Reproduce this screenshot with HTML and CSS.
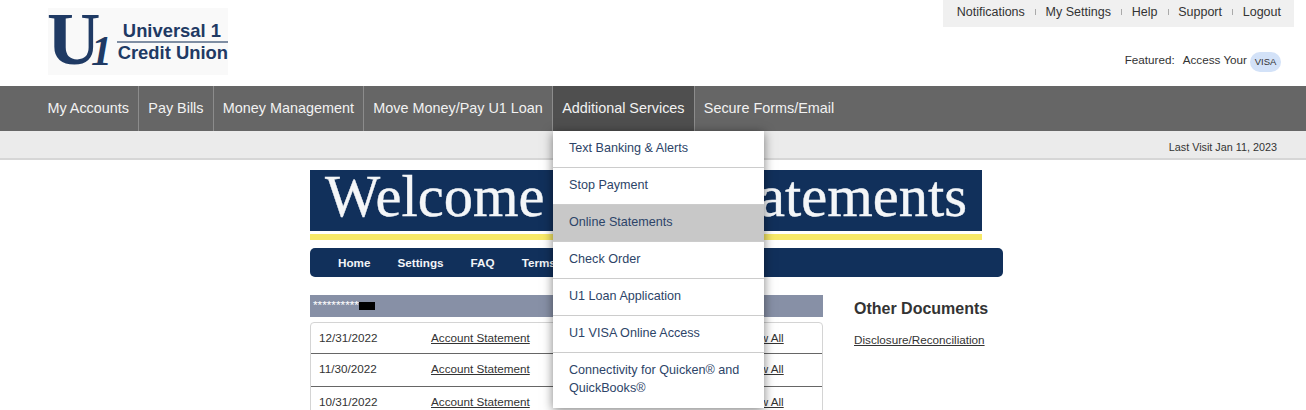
FILE: index.html
```html
<!DOCTYPE html>
<html lang="en">
  <head>
    <meta charset="UTF-8" />
    <meta name="viewport" content="width=device-width, initial-scale=1.0" />
    <title>Online Statements</title>
    <link rel="stylesheet" href="styles.css">
  </head>
  <body>
    <div class="header">
      <div class="logo">
        <span class="logo-u">U</span><span class="logo-one">1</span>
        <div class="logo-name">
          <span class="logo-top">Universal 1</span>
          <span class="logo-bottom">Credit Union</span>
        </div>
      </div>
      <div class="header-right">
        <ul class="top-links">
          <li>Notifications</li>
          <li>My Settings</li>
          <li>Help</li>
          <li>Support</li>
          <li>Logout</li>
        </ul>
        <div class="featured">
          <span class="featured-text">Featured:</span>
          <span class="featured-text">Access Your</span>
          <span class="visa">VISA</span>
        </div>
      </div>
    </div>

    <ul class="nav">
      <li>My Accounts</li>
      <li>Pay Bills</li>
      <li>Money Management</li>
      <li>Move Money/Pay U1 Loan</li>
      <li class="active">
        Additional Services
        <ul class="dropdown">
          <li>Text Banking &amp; Alerts</li>
          <li>Stop Payment</li>
          <li class="selected">Online Statements</li>
          <li>Check Order</li>
          <li>U1 Loan Application</li>
          <li>U1 VISA Online Access</li>
          <li>Connectivity for Quicken® and QuickBooks®</li>
        </ul>
      </li>
      <li>Secure Forms/Email</li>
    </ul>
    <div class="last-visit">Last Visit Jan 11, 2023</div>

    <div class="content">
      <div class="banner">
        <div class="banner-title">
          <span>Welcome</span>
          <span>to eStatements</span>
        </div>
      </div>
      <ul class="tabs">
        <li>Home</li>
        <li>Settings</li>
        <li>FAQ</li>
        <li>Terms</li>
      </ul>
      <div class="columns">
        <div class="statements">
          <div class="account-bar">**********<span class="redacted"></span></div>
          <div class="statement-list">
            <div class="statement-row">
              <span class="date">12/31/2022</span>
              <a class="name">Account Statement</a>
              <a class="view-all">View All</a>
            </div>
            <div class="statement-row">
              <span class="date">11/30/2022</span>
              <a class="name">Account Statement</a>
              <a class="view-all">View All</a>
            </div>
            <div class="statement-row">
              <span class="date">10/31/2022</span>
              <a class="name">Account Statement</a>
              <a class="view-all">View All</a>
            </div>
          </div>
        </div>
        <div class="other-docs">
          <h3>Other Documents</h3>
          <a>Disclosure/Reconciliation</a>
        </div>
      </div>
    </div>
  </body>
</html>
```

FILE: styles.css
```css
html {
  overflow: hidden;
}
body {
  font-family: "Liberation Sans", Arial, sans-serif;
  background-color: #fff;
  color: #333;
  margin: 0;
  padding: 0;
  height: 410px;
  overflow: hidden;
}
ul {
  list-style-type: none;
  margin: 0;
  padding: 0;
}
.header {
  height: 86px;
  display: flex;
  justify-content: space-between;
  align-items: flex-start;
  padding: 0 12px 0 48px;
}
.logo {
  position: relative;
  width: 180px;
  height: 67px;
  margin-top: 8px;
  background: #f9f9f9;
  color: #1f3a64;
}
.logo-u {
  position: absolute;
  left: -1px;
  top: -9px;
  font-family: "Liberation Serif", serif;
  font-size: 74px;
  font-weight: bold;
  line-height: 80px;
}
.logo-one {
  position: absolute;
  left: 43px;
  top: 20px;
  font-family: "Liberation Serif", serif;
  font-size: 42px;
  line-height: 46px;
  font-style: italic;
  font-weight: bold;
}
.logo-name {
  position: absolute;
  left: 68px;
  top: 13px;
  width: 112px;
  display: flex;
  flex-direction: column;
  align-items: flex-end;
  font-size: 18.4px;
  font-weight: bold;
  line-height: 20px;
  white-space: nowrap;
}
.logo-top {
  width: 111px;
  padding-right: 7px;
  box-sizing: border-box;
  text-align: right;
  border-bottom: 2px solid #7f8ea3;
}
.logo-bottom {
  line-height: 20px;
}
.header-right {
  display: flex;
  flex-direction: column;
  align-items: flex-end;
}
.top-links {
  display: flex;
  align-items: center;
  height: 27px;
  padding: 0 13px 4px 14px;
  box-sizing: border-box;
  background: #f0f0f0;
  font-size: 12.5px;
}
.top-links li + li {
  margin-left: 10.4px;
  padding-left: 10.4px;
  background: linear-gradient(#aaa, #aaa) left center / 1px 6px no-repeat;
}
.featured {
  display: flex;
  align-items: center;
  gap: 8px;
  margin: 25px 13px 0 0;
  font-size: 11.7px;
}
.featured-text {
  margin-bottom: 6px;
}
.visa {
  margin-left: -5px;
  width: 31px;
  height: 20px;
  line-height: 19px;
  text-align: center;
  border-radius: 10px;
  background: #d3e2f8;
  font-size: 9.5px;
}
.nav {
  display: flex;
  height: 45px;
  padding-left: 38.3px;
  background: #666;
  color: #f2f2f2;
  font-size: 14.4px;
  line-height: 45px;
}
.nav > li {
  position: relative;
  padding: 0 9.15px;
  border-right: 1px solid #8c8c8c;
}
.nav > li:last-child {
  border-right: none;
}
.nav > li.active {
  background: #4f4f4f;
}
.dropdown {
  position: absolute;
  left: 0;
  top: 45px;
  z-index: 2;
  width: 211px;
  background: #fff;
  box-shadow: 0 2px 10px rgba(0, 0, 0, 0.5);
  color: #2d4468;
  font-size: 12.6px;
  line-height: 18px;
}
.dropdown li {
  padding: 8px 16px 10px;
  border-bottom: 1px solid #ccc;
}
.dropdown li:last-child {
  border-bottom: none;
  padding-bottom: 11px;
}
.dropdown li.selected {
  background: #c8c8c8;
}
.last-visit {
  height: 27px;
  padding-right: 29px;
  background: #ebebeb;
  border-bottom: 2px solid #d6d6d6;
  font-size: 10.8px;
  line-height: 33px;
  text-align: right;
}
.content {
  width: 693px;
  margin: 10px 0 0 310px;
}
.banner {
  width: 672px;
  height: 70px;
  background: linear-gradient(#fff, #fff) 0 61px / 100% 3px no-repeat,
    linear-gradient(#f7e968, #f7e968) 0 64px / 100% 6px no-repeat,
    #11305b;
}
.banner-title {
  height: 61px;
  display: flex;
  justify-content: space-between;
  padding: 0 15px;
  font-family: "Liberation Serif", serif;
  font-size: 58.5px;
  line-height: 53px;
  color: #f4f6f8;
  -webkit-text-stroke: 0.4px #f4f6f8;
  white-space: nowrap;
}
.tabs {
  display: flex;
  gap: 27px;
  height: 29px;
  margin-top: 8px;
  padding-left: 28px;
  border-radius: 5px;
  background: #11305b;
  color: #f2f4f7;
  font-size: 11.7px;
  font-weight: bold;
  line-height: 30px;
}
.columns {
  display: flex;
  margin-top: 18px;
}
.statements {
  width: 513px;
}
.account-bar {
  height: 22px;
  padding-left: 3px;
  background: #8790a6;
  color: #fff;
  font-size: 11.8px;
  line-height: 20px;
}
.redacted {
  display: inline-block;
  width: 16px;
  height: 8px;
  background: #000;
  vertical-align: -1px;
}
.statement-list {
  margin-top: 5px;
  border: 1px solid #d4d4d4;
  border-radius: 4px;
}
.statement-row {
  display: flex;
  height: 32px;
  padding-left: 8px;
  border-bottom: 1px solid #666;
  font-size: 11.7px;
  line-height: 30px;
}
.statement-row:first-child {
  height: 30px;
}
.date {
  width: 112px;
}
.name {
  width: 312px;
  text-decoration: underline;
}
.view-all {
  text-decoration: underline;
}
.other-docs {
  margin: 4px 0 0 31px;
  font-size: 11.7px;
}
.other-docs h3 {
  margin: 0 0 14px;
  font-size: 16px;
  line-height: 20px;
}
.other-docs a {
  text-decoration: underline;
}
```
